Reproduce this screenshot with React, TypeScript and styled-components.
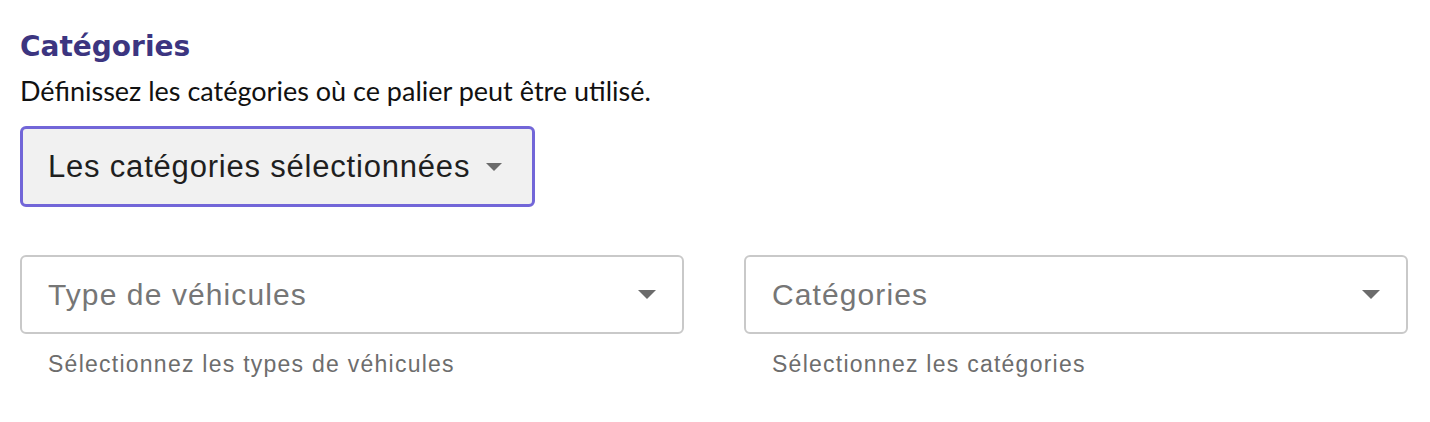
import React from "react";
import styled, { createGlobalStyle } from "styled-components";

const Global = createGlobalStyle`
  html, body { margin: 0; padding: 0; background: #ffffff; }
  * { box-sizing: border-box; }
`;

const Page = styled.div`
  padding: 29px 22px 0 20px;
  display: flex;
  flex-direction: column;
`;

const Title = styled.h2`
  margin: 0;
  font-family: "DejaVu Sans", sans-serif;
  font-weight: 700;
  font-size: 28px;
  line-height: 36px;
  color: #3c3580;
`;

const Description = styled.p`
  margin: 9px 0 0 0;
  font-family: "Lato", sans-serif;
  font-size: 27px;
  line-height: 34px;
  color: #111111;
`;

const ModeSelect = styled.div`
  margin-top: 18px;
  align-self: flex-start;
  display: flex;
  align-items: center;
  gap: 16px;
  height: 81px;
  padding: 0 30px 0 25px;
  border: 3px solid #7266d8;
  border-radius: 6px;
  background: #f1f1f1;
  font-family: "Liberation Sans", Arial, sans-serif;
  font-size: 31px;
  letter-spacing: 0.8px;
  color: #1f1f1f;
`;

const Row = styled.div`
  margin-top: 48px;
  display: grid;
  grid-template-columns: 1fr 1fr;
  column-gap: 60px;
`;

const Field = styled.div`
  display: flex;
  flex-direction: column;
`;

const SelectBox = styled.div`
  height: 79px;
  display: flex;
  align-items: center;
  justify-content: space-between;
  padding: 0 26px 0 26px;
  border: 2px solid #c9c9c9;
  border-radius: 6px;
  background: #ffffff;
  font-family: "Liberation Sans", Arial, sans-serif;
  font-size: 30px;
  letter-spacing: 1.1px;
  color: #767676;
`;

const Helper = styled.div`
  margin-top: 16px;
  padding-left: 28px;
  font-family: "Liberation Sans", Arial, sans-serif;
  font-size: 23px;
  letter-spacing: 1.25px;
  line-height: 28px;
  color: #6d6d6d;
`;

const Caret = ({ w = 16, h = 9 }: { w?: number; h?: number }) => (
  <svg width={w} height={h} viewBox="0 0 16 8" preserveAspectRatio="none">
    <path d="M0 0 L16 0 L8 8 Z" fill="#6b6b6b" />
  </svg>
);

export default function App() {
  return (
    <>
      <Global />
      <Page>
        <Title>Catégories</Title>
        <Description>Définissez les catégories où ce palier peut être utilisé.</Description>
        <ModeSelect>
          <span>Les catégories sélectionnées</span>
          <Caret w={16} h={8} />
        </ModeSelect>
        <Row>
          <Field>
            <SelectBox>
              <span>Type de véhicules</span>
              <Caret w={18} h={9} />
            </SelectBox>
            <Helper>Sélectionnez les types de véhicules</Helper>
          </Field>
          <Field>
            <SelectBox>
              <span>Catégories</span>
              <Caret w={18} h={9} />
            </SelectBox>
            <Helper>Sélectionnez les catégories</Helper>
          </Field>
        </Row>
      </Page>
    </>
  );
}
